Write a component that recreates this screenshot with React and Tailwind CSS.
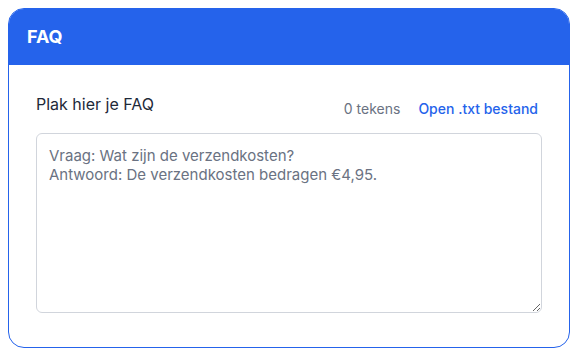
import React, { useState } from "react";

const App = () => {
  const [text, setText] = useState("");

  return (
    <div className="pl-2 pt-2 font-['Inter',sans-serif]">
      <div className="w-[562px] h-[340px] border border-[#2563eb] rounded-2xl overflow-hidden bg-white">
        <div className="bg-[#2563eb] h-[56px] px-[18px] flex items-center">
          <h2 className="text-white text-lg font-bold">FAQ</h2>
        </div>

        <div className="px-[27px] pt-7">
          <div className="flex items-end justify-between">
            <label className="text-base leading-[22px] text-gray-800 mb-[4px]">
              Plak hier je FAQ
            </label>
            <div className="flex items-center gap-[18px] text-sm pr-[4px]">
              <span className="text-gray-500">{text.length} tekens</span>
              <button className="text-[#2563eb] font-medium">
                Open .txt bestand
              </button>
            </div>
          </div>

          <textarea
            value={text}
            onChange={(e) => setText(e.target.value)}
            placeholder={
              "Vraag: Wat zijn de verzendkosten?\nAntwoord: De verzendkosten bedragen €4,95."
            }
            className="mt-[14px] block w-full h-[180px] border border-gray-300 rounded-md px-3 py-3 text-[15px] leading-[19px] text-gray-800 placeholder:text-gray-500 outline-none"
          />
        </div>
      </div>
    </div>
  );
};

export default App;
